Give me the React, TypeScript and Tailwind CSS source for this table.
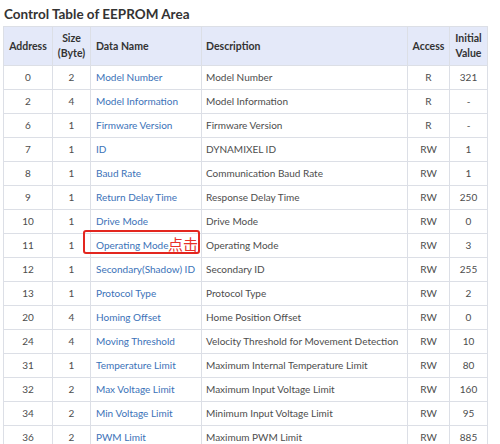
import React from "react";

const rows: [string, string, string, string, string, string][] = [
  ["0", "2", "Model Number", "Model Number", "R", "321"],
  ["2", "4", "Model Information", "Model Information", "R", "-"],
  ["6", "1", "Firmware Version", "Firmware Version", "R", "-"],
  ["7", "1", "ID", "DYNAMIXEL ID", "RW", "1"],
  ["8", "1", "Baud Rate", "Communication Baud Rate", "RW", "1"],
  ["9", "1", "Return Delay Time", "Response Delay Time", "RW", "250"],
  ["10", "1", "Drive Mode", "Drive Mode", "RW", "0"],
  ["11", "1", "Operating Mode", "Operating Mode", "RW", "3"],
  ["12", "1", "Secondary(Shadow) ID", "Secondary ID", "RW", "255"],
  ["13", "1", "Protocol Type", "Protocol Type", "RW", "2"],
  ["20", "4", "Homing Offset", "Home Position Offset", "RW", "0"],
  ["24", "4", "Moving Threshold", "Velocity Threshold for Movement Detection", "RW", "10"],
  ["31", "1", "Temperature Limit", "Maximum Internal Temperature Limit", "RW", "80"],
  ["32", "2", "Max Voltage Limit", "Maximum Input Voltage Limit", "RW", "160"],
  ["34", "2", "Min Voltage Limit", "Minimum Input Voltage Limit", "RW", "95"],
  ["36", "2", "PWM Limit", "Maximum PWM Limit", "RW", "885"],
];

export default function App() {
  return (
    <div
      className="w-[500px] h-[444px] overflow-hidden bg-white pl-[3px]"
      style={{ fontFamily: "Lato, 'Noto Sans', sans-serif" }}
    >
      <div className="h-[26px] pl-[1px] pt-[6px] text-[13.5px] font-bold leading-[16px] text-[#333]">
        Control Table of EEPROM Area
      </div>
      <table className="table-fixed border-collapse text-[10px] text-[#4d4d4d]">
        <colgroup>
          <col className="w-[49px]" />
          <col className="w-[38px]" />
          <col className="w-[111px]" />
          <col className="w-[206px]" />
          <col className="w-[42px]" />
          <col className="w-[38px]" />
        </colgroup>
        <thead>
          <tr className="h-[39px] bg-[#e4e9f9] text-[#333] font-bold leading-[15px] text-[10.5px]">
            <th className="border border-[#dcdfe6] text-center">Address</th>
            <th className="border border-[#dcdfe6] text-center">
              Size
              <br />
              (Byte)
            </th>
            <th className="border border-[#dcdfe6] text-left pl-[5px]">Data Name</th>
            <th className="border border-[#dcdfe6] text-left pl-[4px]">Description</th>
            <th className="border border-[#dcdfe6] text-center">Access</th>
            <th className="border border-[#dcdfe6] text-center">
              Initial
              <br />
              Value
            </th>
          </tr>
        </thead>
        <tbody>
          {rows.map((r, i) => (
            <tr key={i} className="h-[24px]">
              <td className="border border-[#dcdfe6] text-center">{r[0]}</td>
              <td className="border border-[#dcdfe6] text-center">{r[1]}</td>
              <td className="border border-[#dcdfe6] pl-[5px] text-[#3b72b8] whitespace-nowrap relative">
                {r[2]}
                {r[2] === "Operating Mode" && (
                  <>
                    <span
                      className="absolute left-[77px] top-[0px] text-[15px] leading-[19px] text-[#e8302a]"
                      style={{ fontFamily: "'Noto Sans CJK SC', sans-serif" }}
                    >
                      点击
                    </span>
                    <span className="absolute left-[-8px] top-[-4px] w-[117px] h-[24px] rounded-[3px] border-2 border-[#e3261f]" />
                  </>
                )}
              </td>
              <td className="border border-[#dcdfe6] pl-[4px] whitespace-nowrap">{r[3]}</td>
              <td className="border border-[#dcdfe6] text-center">{r[4]}</td>
              <td className="border border-[#dcdfe6] text-center">{r[5]}</td>
            </tr>
          ))}
        </tbody>
      </table>
    </div>
  );
}
